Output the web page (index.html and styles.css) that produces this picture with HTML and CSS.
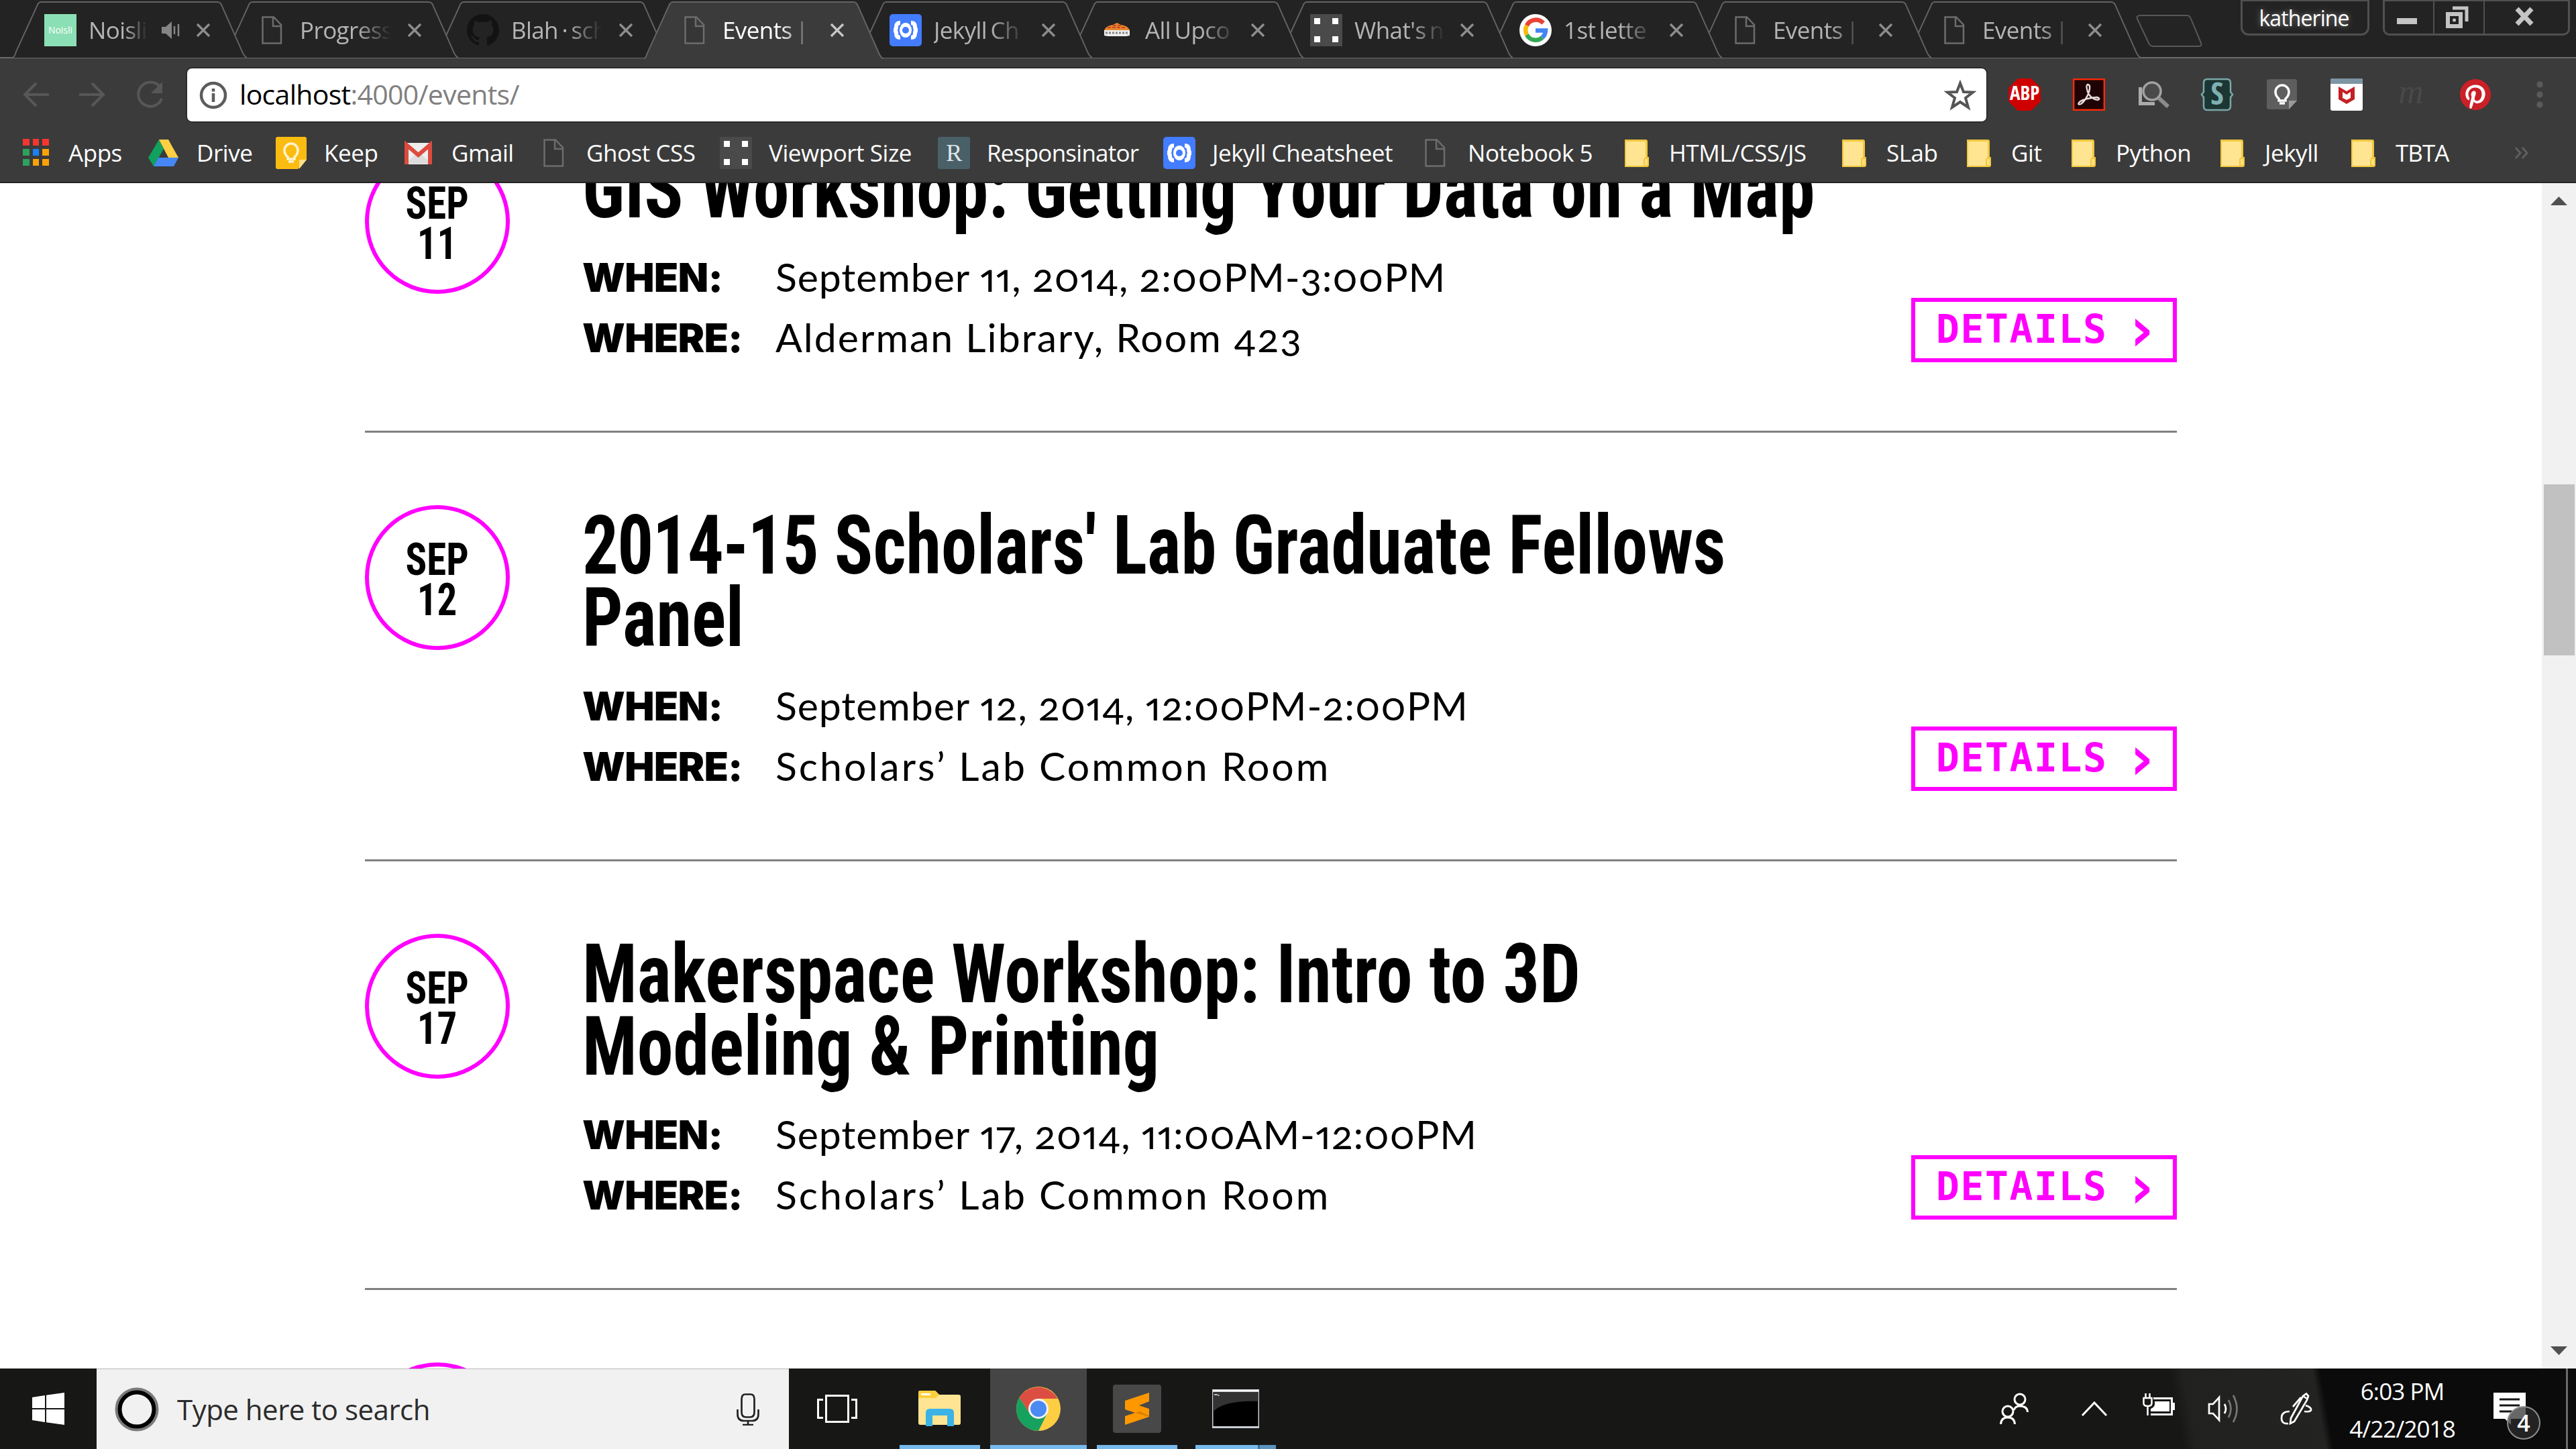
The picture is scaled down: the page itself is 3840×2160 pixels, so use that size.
FILE: index.html
```html
<!DOCTYPE html>
<html lang="en">
<head>
<meta charset="utf-8">
<title>Events</title>
<link rel="stylesheet" href="styles.css">
</head>
<body>
<svg class="defs" aria-hidden="true">
  <symbol id="tab" viewBox="0 0 357 88"><path d="M0 88 Q3 86 5 79 L37 9 Q39 3 43 3 H312 Q317 3 319 9 L350 79 Q353 86 357 88"/></symbol>
  <symbol id="close" viewBox="0 0 24 24"><path d="M3 3 21 21M21 3 3 21" fill="none" stroke="currentColor" stroke-width="3.4"/></symbol>
  <symbol id="doc" viewBox="0 0 48 48"><path d="M10.500 4.500H27L38 16V43.500H10.500Z M26 4.500V18H38" fill="#2e2e2e" fill-opacity=".35" stroke="#6c6c6c" stroke-width="2.500"/></symbol>
  <symbol id="folder" viewBox="0 0 48 48"><path d="M7 4H38Q41 4 41 7V30H43V42Q43 45 40 45H7Z" fill="#f2c83f"/><path d="M9 7H38V30L35 33V43H9Z" fill="#ffe491"/><path d="M37 33H41V42H37Z" fill="#ffdf80"/></symbol>
  <symbol id="viewport" viewBox="0 0 48 48"><path d="M0 0H48V48H0Z" fill="#4a4a4a"/><path d="M6 6H15V15H6ZM33 6H42V15H33ZM6 33H15V42H6ZM33 33H42V42H33Z" fill="#fff"/></symbol>
  <symbol id="jekyll" viewBox="0 0 48 48"><rect width="48" height="48" rx="5" fill="#437cff"/><path d="M16 13Q10 13 10 19Q10 24 6 24Q10 24 10 29Q10 35 16 35M32 13Q38 13 38 19Q38 24 42 24Q38 24 38 29Q38 35 32 35" fill="none" stroke="#fff" stroke-width="6"/><ellipse cx="24" cy="24" rx="9" ry="11" fill="#fff"/><circle cx="24" cy="24" r="5" fill="#437cff"/></symbol>
  <symbol id="bulb" viewBox="0 0 48 48"><path d="M19 33V30Q14 26 14 20A10 10 0 0 1 34 20Q34 26 29 30V33ZM20 37H28" fill="none" stroke-width="3.500"/></symbol>
</svg>

<header class="browser">
  <div class="tabstrip">
    <div class="tabs">
      <div class="tab"><svg class="shape"><use href="#tab"/></svg>
        <svg class="fav" viewBox="0 0 48 48"><rect width="48" height="48" fill="#8bdfb4"/><text x="24" y="29" text-anchor="middle" class="noisli">Noisli</text></svg>
        <span class="title short">Noisli</span>
        <svg class="sound" viewBox="0 0 30 30"><path d="M1 10H7L16 2V28L7 20H1Z" fill="#858585"/><path d="M20 9V21M26 6V24" stroke="#858585" stroke-width="2.500"/></svg>
        <svg class="close"><use href="#close"/></svg></div>
      <div class="tab"><svg class="shape"><use href="#tab"/></svg><svg class="fav"><use href="#doc"/></svg><span class="title">Progress</span><svg class="close"><use href="#close"/></svg></div>
      <div class="tab"><svg class="shape"><use href="#tab"/></svg>
        <svg class="fav" viewBox="0 0 16 16"><path fill="#131313" d="M8 0C3.580 0 0 3.580 0 8c0 3.540 2.290 6.530 5.470 7.590.4.070.55-.17.55-.38 0-.19-.01-.82-.01-1.490-2.010.37-2.530-.49-2.690-.94-.09-.23-.48-.94-.82-1.130-.28-.15-.68-.52-.01-.53.63-.01 1.080.58 1.230.82.72 1.210 1.870.87 2.330.66.07-.52.28-.87.51-1.070-1.780-.2-3.640-.89-3.640-3.950 0-.87.31-1.590.82-2.150-.08-.2-.36-1.020.08-2.120 0 0 .67-.21 2.200.82.64-.18 1.320-.27 2-.27s1.360.09 2 .27c1.530-1.040 2.200-.82 2.200-.82.44 1.100.16 1.920.08 2.120.51.56.82 1.270.82 2.150 0 3.070-1.870 3.750-3.650 3.950.29.25.54.73.54 1.480 0 1.070-.01 1.930-.01 2.200 0 .21.15.46.55.38A8.010 8.010 0 0 0 16 8c0-4.420-3.580-8-8-8"/></svg>
        <span class="title">Blah · sch</span><svg class="close"><use href="#close"/></svg></div>
      <div class="tab active"><svg class="shape"><use href="#tab"/></svg><svg class="fav"><use href="#doc"/></svg><span class="title">Events | S</span><svg class="close"><use href="#close"/></svg></div>
      <div class="tab"><svg class="shape"><use href="#tab"/></svg><svg class="fav"><use href="#jekyll"/></svg><span class="title">Jekyll Ch</span><svg class="close"><use href="#close"/></svg></div>
      <div class="tab"><svg class="shape"><use href="#tab"/></svg>
        <svg class="fav" viewBox="0 0 48 48"><path d="M5 24Q8 17 18 16L24 13 30 16Q40 17 43 24Z" fill="#e8862b"/><path d="M10 20H38M18 17H30" stroke="#c8452a" stroke-width="2" stroke-dasharray="5 2"/><path d="M5 24H43V32L38 33H10L5 32Z" fill="#eee"/><path d="M7 28H41" stroke="#888" stroke-width="3" stroke-dasharray="3 2"/></svg>
        <span class="title">All Upco</span><svg class="close"><use href="#close"/></svg></div>
      <div class="tab"><svg class="shape"><use href="#tab"/></svg><svg class="fav"><use href="#viewport"/></svg><span class="title">What's n</span><svg class="close"><use href="#close"/></svg></div>
      <div class="tab"><svg class="shape"><use href="#tab"/></svg>
        <svg class="fav" viewBox="0 0 48 48"><circle cx="24" cy="24" r="24" fill="#fff"/><g fill="none" stroke-width="6.500"><path d="M35.500 13.500A15 15 0 0 0 11 17" stroke="#ea4335"/><path d="M11 17A15 15 0 0 0 11 31" stroke="#fbbc05"/><path d="M11 31A15 15 0 0 0 34 35" stroke="#34a853"/><path d="M34 35A15 15 0 0 0 39 24.500H24" stroke="#4285f4"/></g></svg>
        <span class="title">1st lette</span><svg class="close"><use href="#close"/></svg></div>
      <div class="tab"><svg class="shape"><use href="#tab"/></svg><svg class="fav"><use href="#doc"/></svg><span class="title">Events |</span><svg class="close"><use href="#close"/></svg></div>
      <div class="tab"><svg class="shape"><use href="#tab"/></svg><svg class="fav"><use href="#doc"/></svg><span class="title">Events |</span><svg class="close"><use href="#close"/></svg></div>
    </div>
    <svg class="newtab" viewBox="0 0 104 52"><path d="M9 2H78Q82 2 84 7L99 43Q101 48 96 48H28Q23 48 21 43L4 7Q2 2 9 2Z" fill="#242424" stroke="#585858" stroke-width="2"/></svg>
    <div class="profile">katherine</div>
    <div class="winctl">
      <span class="wc min"><svg viewBox="0 0 36 48"><path d="M3 27H33V36H3Z" fill="#c4c4c4"/></svg></span>
      <span class="wc max"><svg viewBox="0 0 36 48"><path d="M11 12H32V32" fill="none" stroke="#c4c4c4" stroke-width="5"/><rect x="4" y="21" width="19" height="18" fill="none" stroke="#c4c4c4" stroke-width="6"/><circle cx="13.500" cy="30" r="2.500" fill="#c4c4c4"/></svg></span>
      <span class="wc cls"><svg viewBox="0 0 36 48"><path d="M7 13 29 36M29 13 7 36" stroke="#c4c4c4" stroke-width="7"/></svg></span>
    </div>
  </div>

  <div class="toolbar">
    <svg class="nav" viewBox="0 0 48 48"><path d="M24 7 7 24 24 41M7 24H43" /></svg>
    <svg class="nav" viewBox="0 0 48 48"><path d="M22 7 39 24 22 41M39 24H3" /></svg>
    <svg class="nav" viewBox="0 0 48 48"><path d="M38 12A18 18 0 1 0 41 30"/><path d="M42 5V22H25Z" class="solid"/></svg>
    <div class="omnibox">
      <svg class="info" viewBox="0 0 44 44"><circle cx="22" cy="22" r="18" fill="none" stroke="#5c5c5c" stroke-width="4.500"/><path d="M22 19V32M22 12V16.500" stroke="#5c5c5c" stroke-width="4.500"/></svg>
      <span class="url">localhost<i>:4000/events/</i></span>
      <svg class="star" viewBox="0 0 48 48"><path d="M24 6 29 19 43 19.500 32 28 36 42 24 34 12 42 16 28 5 19.500 19 19Z" fill="none" stroke="#555" stroke-width="4"/></svg>
    </div>
    <div class="exts">
      <svg viewBox="0 0 48 48"><path d="M14 0H34L48 14V34L34 48H14L0 34V14Z" fill="#cf0000"/><text x="24" y="32" text-anchor="middle" class="abp">ABP</text></svg>
      <svg viewBox="0 0 48 48"><rect x="1.200" y="1.200" width="45.600" height="45.600" fill="#1f0203" stroke="#fb2a0b" stroke-width="2.400"/><path d="M22 9Q27 9 24 20Q20 32 12 38Q7 40 9 36Q14 30 36 28Q42 30 37 32Q27 31 22 20Q19 10 22 9Z" fill="none" stroke="#e9dcdc" stroke-width="2.400"/></svg>
      <svg viewBox="0 0 48 48"><path d="M7 13H2V40H26V35H7Z" fill="#ababab"/><circle cx="22" cy="19" r="13" fill="#4a4a4a" stroke="#a2a2a2" stroke-width="3.500"/><path d="M32 29 46 42" stroke="#8b8b8b" stroke-width="6"/></svg>
      <svg viewBox="0 0 48 48"><path d="M8 1H38Q43 1 43 7V20L46 24 43 28V41Q43 47 38 47H8Q3 47 3 41V28L0 24 3 20V7Q3 1 8 1Z" fill="#1c3633" stroke="#7aa7a8" stroke-width="2.500"/><text x="23" y="39" text-anchor="middle" class="stylus">S</text></svg>
      <svg viewBox="0 0 48 48"><path d="M4 1H43Q46 1 46 4V33L34 46H4Q1 46 1 43V4Q1 1 4 1Z" fill="#5e5e5e"/><path d="M46 33H34V46Z" fill="#9a9a9a"/><use href="#bulb" stroke="#fff"/></svg>
      <svg viewBox="0 0 48 48"><rect width="48" height="48" rx="3" fill="#fff"/><path d="M0 8V3Q0 0 3 0H45Q48 0 48 3V8Z" fill="#7e95a3"/><path d="M12 12 24 19 36 12V31L24 38 12 31Z" fill="#c41f25"/><path d="M18 20 24 24 30 20V29L24 32 18 29Z" fill="#fff"/></svg>
      <svg viewBox="0 0 48 48"><text x="24" y="37" text-anchor="middle" class="mem">m</text></svg>
      <svg viewBox="-.5 -.5 25 25"><circle cx="12" cy="12" r="11.500" fill="#fff"/><path fill="#cb2027" d="M12 0C5.373 0 0 5.372 0 12c0 5.084 3.163 9.426 7.627 11.174-.105-.949-.2-2.405.042-3.441.218-.937 1.407-5.965 1.407-5.965s-.359-.719-.359-1.782c0-1.668.967-2.914 2.171-2.914 1.023 0 1.518.769 1.518 1.690 0 1.029-.655 2.568-.994 3.995-.283 1.194.599 2.169 1.777 2.169 2.133 0 3.772-2.249 3.772-5.495 0-2.873-2.064-4.882-5.012-4.882-3.414 0-5.418 2.561-5.418 5.207 0 1.031.397 2.138.893 2.738.098.119.112.224.083.345l-.333 1.360c-.053.22-.174.267-.402.161-1.499-.698-2.436-2.889-2.436-4.649 0-3.785 2.750-7.262 7.929-7.262 4.163 0 7.398 2.967 7.398 6.931 0 4.136-2.607 7.464-6.227 7.464-1.216 0-2.359-.631-2.750-1.378l-.748 2.853c-.271 1.043-1.002 2.350-1.492 3.146 1.124.347 2.317.535 3.554.535 6.627 0 12-5.373 12-12C24 5.372 18.627 0 12 0z"/></svg>
      <svg viewBox="0 0 48 48"><g fill="#5a5a5a"><circle cx="24" cy="9" r="4.700"/><circle cx="24" cy="24" r="4.700"/><circle cx="24" cy="39" r="4.700"/></g></svg>
    </div>
  </div>

  <nav class="bookmarks">
    <a class="bm"><svg viewBox="0 0 48 48"><path d="M5 3H15V13H5ZM20 3H29V13H20ZM34 3H44V13H34Z" fill="#f4362f"/><path d="M5 18H15V28H5Z" fill="#2fa15c"/><path d="M20 18H29V28H20Z" fill="#1b80f5"/><path d="M34 18H44V28H34ZM20 33H29V43H20ZM34 33H44V43H34Z" fill="#fba20a"/><path d="M5 33H15V43H5Z" fill="#2fa15c"/></svg>Apps</a>
    <a class="bm"><svg viewBox="0 0 48 48"><path d="M17 4 1 31 9 44 24 18Z" fill="#11a05e"/><path d="M17 4H31L46 31H31Z" fill="#ffcf44"/><path d="M16 31H46L39 44H9Z" fill="#4587f4"/></svg>Drive</a>
    <a class="bm"><svg viewBox="0 0 48 48"><path d="M4 0H44Q47 0 47 3V34L34 48H4Q1 48 1 45V3Q1 0 4 0Z" fill="#fbbc12"/><path d="M47 34H36V48Z" fill="#ffe08a"/><use href="#bulb" stroke="#fff3cf"/></svg>Keep</a>
    <a class="bm"><svg viewBox="0 0 48 48"><rect x="3" y="9" width="41" height="32" rx="3" fill="#eee"/><path d="M4 40 23.500 22 43 40Z" fill="#dcdcdc"/><path d="M6 41V12L23.500 27 41 12V41" fill="none" stroke="#dd4b3e" stroke-width="6"/></svg>Gmail</a>
    <a class="bm"><svg><use href="#doc"/></svg>Ghost CSS</a>
    <a class="bm"><svg><use href="#viewport"/></svg>Viewport Size</a>
    <a class="bm"><svg viewBox="0 0 48 48"><rect width="48" height="48" rx="3" fill="#4a6069"/><text x="24" y="36" text-anchor="middle" class="resp">R</text></svg>Responsinator</a>
    <a class="bm"><svg><use href="#jekyll"/></svg>Jekyll Cheatsheet</a>
    <a class="bm"><svg><use href="#doc"/></svg>Notebook 5</a>
    <a class="bm"><svg><use href="#folder"/></svg>HTML/CSS/JS</a>
    <a class="bm"><svg><use href="#folder"/></svg>SLab</a>
    <a class="bm"><svg><use href="#folder"/></svg>Git</a>
    <a class="bm"><svg><use href="#folder"/></svg>Python</a>
    <a class="bm"><svg><use href="#folder"/></svg>Jekyll</a>
    <a class="bm"><svg><use href="#folder"/></svg>TBTA</a>
    <svg class="more" viewBox="0 0 24 24"><path d="M3 4 10 12 3 20M13 4 20 12 13 20" fill="none" stroke="#5f5f5f" stroke-width="3"/></svg>
  </nav>
</header>

<div class="viewport">
  <main class="events">
    <article class="event">
      <div class="date"><span>SEP<br>11</span></div>
      <div class="body">
        <h2>GIS Workshop: Getting Your Data on a Map</h2>
        <dl><dt>WHEN:</dt><dd class="when">September 11, 2014, 2:00PM-3:00PM</dd><dt>WHERE:</dt><dd class="tight">Alderman Library, Room 423</dd></dl>
      </div>
      <a class="details">DETAILS <b>›</b></a>
    </article>
    <article class="event">
      <div class="date"><span>SEP<br>12</span></div>
      <div class="body">
        <h2 class="long"><span>2014-15</span> Scholars' Lab Graduate Fellows<br>Panel</h2>
        <dl><dt>WHEN:</dt><dd class="when">September 12, 2014, 12:00PM-2:00PM</dd><dt>WHERE:</dt><dd>Scholars’ Lab Common Room</dd></dl>
      </div>
      <a class="details">DETAILS <b>›</b></a>
    </article>
    <article class="event">
      <div class="date"><span>SEP<br>17</span></div>
      <div class="body">
        <h2>Makerspace Workshop: Intro to 3D<br>Modeling &amp; Printing</h2>
        <dl><dt>WHEN:</dt><dd class="when">September 17, 2014, 11:00AM-12:00PM</dd><dt>WHERE:</dt><dd>Scholars’ Lab Common Room</dd></dl>
      </div>
      <a class="details">DETAILS <b>›</b></a>
    </article>
    <article class="event">
      <div class="date"></div>
    </article>
  </main>
  <div class="scrollbar">
    <svg viewBox="0 0 51 51"><path d="M13 33 25.500 20 38 33Z" fill="#505050"/></svg>
    <div class="thumb"></div>
    <svg class="down" viewBox="0 0 51 51"><path d="M13 18 25.500 31 38 18Z" fill="#505050"/></svg>
  </div>
</div>

<footer class="taskbar">
  <div class="start"><svg viewBox="0 0 48 48"><path d="M0 7 19 4V23H0ZM21 3.700 48 0V23H21ZM0 25H19V44L0 41ZM21 25H48V48L21 44.300Z" fill="#fff"/></svg></div>
  <div class="search">
    <svg class="ring" viewBox="0 0 66 66"><circle cx="33" cy="33" r="30" fill="none" stroke="#7b7b7b" stroke-width="5"/><circle cx="33" cy="33" r="25.500" fill="none" stroke="#000" stroke-width="6"/></svg>
    <span>Type here to search</span>
    <svg class="mic" viewBox="0 0 34 48"><path d="M7.500 9Q7.500 1.500 13 1.500H21Q26.500 1.500 26.500 9V28Q26.500 35.500 20 35.500H14Q7.500 35.500 7.500 28ZM1.500 24V31Q1.500 41 11 41H23Q32.500 41 32.500 31V24M17 41V47M9 47H25" fill="none" stroke="#222" stroke-width="2.700"/></svg>
  </div>
  <div class="app view"><svg viewBox="0 0 60 48"><g fill="none" stroke="#fff" stroke-width="3"><path d="M13.500 4.500H46.500V43.500H13.500ZM9 10.500H1.500V37.500H9M51 10.500H58.500V37.500H51"/></g></svg></div>
  <div class="app run"><svg viewBox="0 0 66 66"><path d="M1 9Q1 6 4 6H26L32 12H61Q64 12 64 15V54Q64 57 61 57H4Q1 57 1 54Z" fill="#ffe593"/><path d="M1 9Q1 6 4 6H26L32 12 27 17H1Z" fill="#fdd03b"/><path d="M5 10H19V13H5Z" fill="#fff"/><path d="M12 59V39Q12 33 18 33H48Q54 33 54 39V59H44V43H22V59Z" fill="#3bb3e6"/></svg></div>
  <div class="app run current"><svg viewBox="0 0 66 66"><circle cx="33" cy="33" r="33" fill="#fdcd42"/><path d="M4.500 16.500A33 33 0 0 1 61.600 18H33L20 40Z" fill="#dd4e42"/><path d="M4.500 16.500A33 33 0 0 0 33 66L46 40 20 40Z" fill="#16a15f"/><circle cx="33" cy="33" r="15" fill="#f2f2f2"/><circle cx="33" cy="33" r="12" fill="#4b89f3"/></svg></div>
  <div class="app run"><svg class="sublime" viewBox="0 0 72 72"><rect width="72" height="72" rx="4" fill="#484848"/><path d="M54 12V25L39 31 54 36V48L18 60V47L33 42 18 37V24Z" fill="#ff9800"/><path d="M54 48 33 42 40 40 54 46Z" fill="#d97f00"/></svg></div>
  <div class="app run multi"><svg class="cmd" viewBox="0 0 72 60"><rect x="1" y="1" width="70" height="58" fill="#c9ced4"/><path d="M2 2H70V4H2Z" fill="#fff"/><rect x="2.500" y="5" width="67" height="51" fill="#000"/><path d="M2.500 5H69.500V19Q20 17 2.500 34Z" fill="#333"/><path d="M4 9H9M10 9 11 11" stroke="#bbb" stroke-width="2"/></svg></div>
  <div class="tray">
    <svg class="people" viewBox="0 0 48 48"><g fill="none" stroke="#fff" stroke-width="3"><circle cx="33" cy="10" r="8"/><path d="M24 26Q26 20 33 20Q44 20 44.500 29"/><circle cx="15" cy="28" r="8"/><path d="M4.500 47Q5 37 15 37Q25 37 25.500 47"/></g></svg>
    <svg class="chev" viewBox="0 0 48 48"><path d="M6 34 24 15 42 34" fill="none" stroke="#fff" stroke-width="3"/></svg>
    <svg class="bat" viewBox="0 0 48 48"><path d="M16 7H45V15H48V26H45V34H12V31H42V10H16Z" fill="#fff"/><path d="M18 13H40V28H12V24Q17 22 18 18Z" fill="#fff"/><path d="M1.500 8V16Q1.500 20 7.500 20Q13.500 20 13.500 16V8ZM4.500 8V1M10.500 8V1M7.500 20V34" fill="none" stroke="#fff" stroke-width="2.500"/></svg>
    <svg class="vol" viewBox="0 0 48 48"><path d="M2 17H8L17 7V41L8 31H2Z" fill="none" stroke="#fff" stroke-width="2.700"/><path d="M25 17Q29 24 25 31" fill="none" stroke="#fff" stroke-width="2.700"/><path d="M31 11Q38 24 31 37M38 4Q49 24 38 44" fill="none" stroke="#777" stroke-width="2.700"/></svg>
    <svg class="pen" viewBox="0 0 48 48"><g fill="none" stroke="#fff" stroke-width="2.700"><path d="M34 5 39 1.500 42 5 40 11 21 43 15 46 16 38 34 5ZM34 5 40 9M31 7 19 21"/><path d="M14 28Q2 28 2 38Q2 47 12 46M38 19Q47 22 46 26Q45 29 36 28"/></g></svg>
    <div class="clock">6:03 PM<br>4/22/2018</div>
    <div class="notif">
      <svg viewBox="0 0 48 48"><path d="M0 0H48V39H26V48L17 39H0Z" fill="#fff"/><path d="M9 10H39M9 19H39M9 28H28" stroke="#161616" stroke-width="3"/></svg>
      <span class="badge">4</span>
    </div>
    <div class="peek"></div>
  </div>
</footer>
</body>
</html>
```
FILE: styles.css
```css
* { box-sizing: border-box; }

body {
  margin: 0;
  width: 3840px;
  height: 2160px;
  overflow: hidden;
  display: flex;
  flex-direction: column;
  background: #fff;
  font-family: "Open Sans", "Noto Sans", sans-serif;
}

svg { display: block; flex: none; }
.defs { position: absolute; width: 0; height: 0; }

/* Browser chrome */
.browser { flex: none; height: 273px; background: #3b3b3b; border-bottom: 2px solid #242424; color: #fff; }

.tabstrip {
  height: 88px;
  display: flex;
  align-items: flex-start;
  padding-left: 15px;
  background: linear-gradient(#6a6a6a, #6a6a6a) 0 85px / 100% 2px no-repeat, linear-gradient(#232323 85px, #3b3b3b 85px);
}
.tabs { display: flex; width: 3167px; }
.tab {
  position: relative;
  flex: none;
  width: 315px;
  height: 88px;
  padding: 21px 0 0 51px;
  display: flex;
  color: #b4b4b4;
}
.tab:nth-child(n+6) { width: 312px; }
.tab:nth-child(1) { z-index: 10; }
.tab:nth-child(2) { z-index: 9; }
.tab:nth-child(3) { z-index: 8; }
.tab:nth-child(5) { z-index: 7; }
.tab:nth-child(6) { z-index: 6; }
.tab:nth-child(7) { z-index: 5; }
.tab:nth-child(8) { z-index: 4; }
.tab:nth-child(9) { z-index: 3; }
.tab:nth-child(10) { z-index: 2; }
.shape { position: absolute; left: 0; top: 0; width: 357px; height: 86px; fill: #232323; stroke: #636363; stroke-width: 2; z-index: -1; overflow: hidden; }
.shape use { height: 88px; width: 357px; }
.tab.active { z-index: 11; color: #fff; }
.tab.active .shape { fill: #3b3b3b; height: 88px; }
.fav { width: 48px; height: 48px; }
.title {
  width: 136px;
  margin-left: 18px;
  height: 52px;
  line-height: 48px;
  font-size: 35px;
  letter-spacing: -.6px;
  word-spacing: -3px;
  white-space: nowrap;
  overflow: hidden;
  -webkit-mask-image: linear-gradient(90deg, #000 62%, transparent);
  mask-image: linear-gradient(90deg, #000 62%, transparent);
}
.title.short { width: 88px; }
.sound { width: 30px; height: 30px; margin: 9px 0 0 20px; }
.close { width: 24px; height: 24px; margin: 12px 0 0 23px; color: #8d8d8d; }
.short ~ .close { margin-left: 21px; }
.tab:nth-child(n+6) .close { margin-left: 20px; }
.active .close { color: #c5c5c5; }
.noisli { font: 14px "Open Sans", sans-serif; fill: #fff; }

.newtab { width: 104px; height: 52px; margin-top: 21px; }
.profile {
  margin-left: 54px;
  width: 192px;
  height: 53px;
  border: 3px solid #505050;
  border-top: 2px solid #505050;
  border-radius: 0 0 12px 12px;
  padding-right: 3px;
  text-align: center;
  font-size: 32px;
  line-height: 50px;
  letter-spacing: -.9px;
  text-shadow: 0 0 8px #888;
}
.winctl { display: flex; margin-left: 20px; width: 279px; height: 53px; border: 3px solid #505050; border-top-width: 2px; border-radius: 0 0 10px 10px; }
.wc { display: flex; justify-content: center; border-right: 2px solid #505050; width: 74px; padding-right: 6px; }
.wc.max { width: 75px; }
.wc.cls { flex: 1; border-right: 0; }
.wc svg { width: 36px; height: 48px; margin-top: -2px; }

.toolbar { height: 108px; display: flex; padding: 14px 0 0 30px; }
.nav { width: 48px; height: 48px; margin: 15px 37px 0 0; fill: none; stroke: #575757; stroke-width: 4; }
.nav + .nav + .nav { margin-right: 31px; }
.nav .solid { fill: #575757; stroke: none; }
.omnibox {
  width: 2682px;
  height: 79px;
  background: #fff;
  border-radius: 7px;
  box-shadow: 0 0 0 1.5px #262626;
  display: flex;
  align-items: center;
  padding: 0 15px 0 17px;
}
.info { width: 44px; height: 44px; }
.url { margin: -3px 0 0 17px; flex: 1; color: #000; font-size: 41px; letter-spacing: -.7px; line-height: 76px; }
.url i { font-style: normal; color: #808080; }
.star { width: 48px; height: 48px; }
.exts { display: flex; gap: 48px; margin: 15px 0 0 33px; }
.exts svg { width: 48px; height: 48px; overflow: visible; }
.abp { font: 700 29px "Open Sans Condensed", "Open Sans", sans-serif; fill: #fff; }
.stylus { font: 700 47px "Open Sans Condensed", sans-serif; fill: #7fb0b1; }
.mem { font: italic 52px "Liberation Serif", serif; fill: #494949; }

.bookmarks { display: flex; padding: 8px 0 0 29px; }
.bm { display: flex; flex: none; width: 191px; line-height: 47px; font-size: 35px; letter-spacing: -.45px; white-space: nowrap; }
.bm svg { width: 48px; height: 48px; margin-right: 25px; }
.bm:nth-child(2), .bm:nth-child(3) { width: 190px; }
.bm:nth-child(4) { width: 201px; }
.bm:nth-child(5) { width: 272px; }
.bm:nth-child(6) { width: 325px; }
.bm:nth-child(7) { width: 336px; letter-spacing: -.75px; }
.bm:nth-child(8) { width: 381px; }
.bm:nth-child(9) { width: 300px; }
.bm:nth-child(10) { width: 324px; }
.bm:nth-child(11) { width: 186px; }
.bm:nth-child(12) { width: 156px; }
.bm:nth-child(13) { width: 222px; }
.bm:nth-child(14) { width: 195px; }
.bm:nth-child(15) { width: 249px; letter-spacing: -1px; }
.resp { font: 36px "Liberation Serif", serif; fill: #dfe6e8; }
.more { width: 24px; height: 24px; margin-top: 12px; }

/* Page */
.viewport { flex: none; height: 1767px; display: flex; justify-content: space-between; overflow: hidden; background: #fff; }
.events { width: 2701px; margin: -159px 0 0 544px; }
.event { display: flex; padding: 108px 0 94px; border-bottom: 3px solid #808080; }
.date {
  flex: none;
  width: 216px;
  height: 216px;
  border: 6px solid #f0f;
  border-radius: 50%;
  padding-top: 45px;
  text-align: center;
  font: 700 67px/60px "Roboto Condensed", Roboto, sans-serif;
}
.date span { display: inline-block; transform: scaleX(.88); }
.body { flex: 1; min-width: 0; padding-left: 108px; }
h2 {
  margin: 0 0 31px;
  padding-top: 7px;
  width: max-content;
  font: 700 122px/108px "Roboto Condensed", Roboto, sans-serif;
  transform: scaleX(.885);
  transform-origin: 0 0;
  white-space: nowrap;
}
h2.long { transform: scaleX(.875); }
h2.long span { letter-spacing: -1.8px; }
dl { margin: 0; display: grid; grid-template-columns: 288px 1fr; grid-auto-rows: 90px; align-items: baseline; line-height: 90px; }
dt { font-family: Inter, sans-serif; font-weight: 900; font-size: 59px; letter-spacing: -.5px; }
dd { margin: 0; font-family: Lato, sans-serif; font-size: 59px; letter-spacing: 3px; font-variant-numeric: oldstyle-nums proportional-nums; white-space: nowrap; }
dd.when { letter-spacing: .9px; }
dd.tight { letter-spacing: 2px; }
.details {
  align-self: flex-end;
  margin-bottom: 8px;
  flex: none;
  width: 396px;
  height: 96px;
  border: 6px solid #f0f;
  padding-left: 31px;
  color: #f0f;
  font: 700 58px/82px "DejaVu Sans Mono", monospace;
  letter-spacing: 1.6px;
  white-space: pre;
}
.details b { font-size: 92px; line-height: 0; vertical-align: -12px; margin-left: -14px; }

.scrollbar { width: 51px; background: #f1f1f1; display: flex; flex-direction: column; }
.scrollbar svg { width: 51px; height: 51px; }
.thumb { width: 46px; height: 255px; margin: 398px 0 0 3px; background: #c1c1c1; }
.scrollbar .down { margin-top: auto; }

/* Taskbar */
.taskbar {
  flex: none;
  height: 120px;
  display: flex;
  color: #fff;
  background: linear-gradient(80deg, #171716 84.300%, #212120 84.800%, #232322 89.800%, #0b0b0b 90.100%);
}
.start { width: 144px; padding: 36px 48px; }
.start svg { width: 48px; height: 48px; }
.search { width: 1032px; background: #f1f1f1; border-top: 1px solid #b9b9b9; display: flex; align-items: center; padding: 0 44px 0 27px; color: #2b2b2b; }
.ring { width: 66px; height: 66px; }
.search span { flex: 1; margin-left: 27px; font-size: 42px; letter-spacing: -.5px; line-height: 116px; }
.mic { width: 34px; height: 48px; }
.app { width: 144px; height: 120px; margin-right: 3px; display: flex; align-items: center; justify-content: center; position: relative; }
.app.view { margin-right: 9px; }
.app.view svg { width: 60px; height: 48px; }
.app svg { width: 66px; height: 66px; }
.app .sublime { width: 72px; height: 72px; }
.app .cmd { width: 72px; height: 60px; }
.run::after { content: ""; position: absolute; left: 12px; right: 12px; bottom: 0; height: 6px; background: #76b9ed; }
.current { background: #454545; }
.current::after { left: 0; right: 0; }
.multi::after { background: linear-gradient(90deg, #76b9ed 93px, #456f8f 93px 96px, #5b93bd 96px); }
.tray { margin-left: auto; display: flex; align-items: center; }
.tray > svg { width: 48px; height: 48px; }
.tray .people { margin-right: 72px; }
.tray .chev { margin-right: 48px; }
.tray .bat { margin-right: 49px; }
.tray .vol { margin-right: 60px; }
.clock { width: 170px; margin: 3px 0 0 49px; text-align: center; font-size: 35px; line-height: 56px; letter-spacing: -.9px; white-space: nowrap; }
.notif { position: relative; margin-left: 51px; width: 48px; height: 48px; }
.notif svg { width: 48px; height: 48px; }
.badge {
  position: absolute;
  left: 20px;
  top: 20px;
  width: 50px;
  height: 50px;
  border: 2px solid #8d8d8d;
  border-radius: 50%;
  background: rgba(44, 44, 44, .72);
  text-align: center;
  font-weight: 600;
  font-size: 34px;
  line-height: 46px;
}
.peek { width: 3px; height: 120px; margin: 0 12px 0 60px; background: #6b6b6b; }
```
